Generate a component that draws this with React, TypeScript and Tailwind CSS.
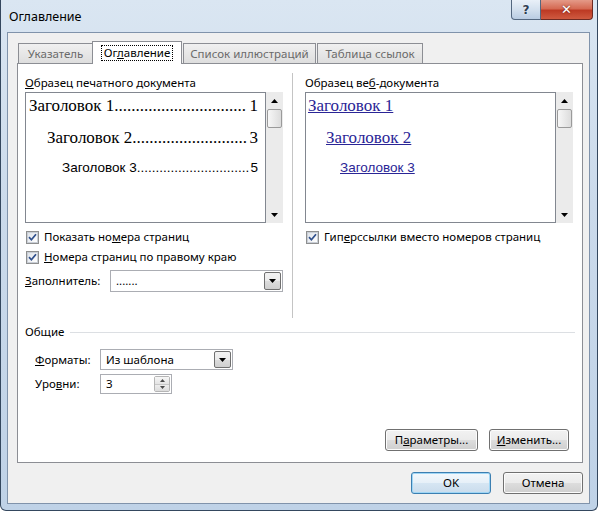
import React from "react";

function Tri({ up = false }: { up?: boolean }) {
  return (
    <svg width="7" height="4" viewBox="0 0 7 4">
      <path d={up ? "M0 4 L3.5 0 L7 4 Z" : "M0 0 L7 0 L3.5 4 Z"} fill="#000" />
    </svg>
  );
}

function Check() {
  return (
    <span className="w-[13px] h-[13px] border border-[#8e8f8f] bg-white flex items-center justify-center shrink-0">
      <span className="w-[11px] h-[11px] border border-[#c9ced6] bg-[linear-gradient(135deg,#dfe3e9,#ffffff)] flex items-center justify-center">
        <svg width="9" height="9" viewBox="0 0 9 9">
          <path d="M1 4.2 L3.4 6.8 L8 1.2" stroke="#2f4f8c" strokeWidth="1.7" fill="none" />
        </svg>
      </span>
    </span>
  );
}

function VScroll() {
  return (
    <div className="w-[17px] bg-[#ebebeb] flex flex-col items-center shrink-0">
      <div className="h-[17px] flex items-center justify-center">
        <Tri up />
      </div>
      <div className="w-[15px] h-[19px] border border-[#9a9a9a] rounded-[2px] bg-[linear-gradient(90deg,#f7f7f7,#dcdcdc)]" />
      <div className="flex-1" />
      <div className="h-[17px] flex items-center justify-center">
        <Tri />
      </div>
    </div>
  );
}

function DropBtn() {
  return (
    <div className="w-[17px] h-full border border-[#707070] rounded-[2px] bg-[linear-gradient(180deg,#f2f2f2_0%,#ebebeb_50%,#dddddd_50%,#cfcfcf_100%)] flex items-center justify-center">
      <Tri />
    </div>
  );
}

function Button({ children, w, def = false }: { children: React.ReactNode; w: string; def?: boolean }) {
  return (
    <div
      className={
        def
          ? `${w} h-[22px] border border-[#3c7fb1] rounded-[3px] bg-[linear-gradient(180deg,#f3f8fc_0%,#e6f0f8_50%,#d6e6f3_50%,#cadcec_100%)] shadow-[inset_0_0_0_1px_#9fd6f5] flex items-center justify-center`
          : `${w} h-[22px] border border-[#707070] rounded-[3px] bg-[linear-gradient(180deg,#f2f2f2_0%,#ebebeb_50%,#dddddd_50%,#cfcfcf_100%)] shadow-[inset_0_0_0_1px_#fcfcfc] flex items-center justify-center`
      }
    >
      {children}
    </div>
  );
}

// text + dot leader + page number, dots counted to fit the line
function TocLine({ text, dots, page, cls }: { text: string; dots: number; page: string; cls: string }) {
  return (
    <div className={`flex justify-between whitespace-nowrap ${cls}`}>
      <span>
        {text}
        {".".repeat(dots)}
      </span>
      <span>{page}</span>
    </div>
  );
}

export default function App() {
  return (
    <div className="w-[600px] h-[513px] bg-white font-['Noto_Sans',sans-serif] text-[11.5px] text-black">
      <div className="w-[598px] h-[511px] border-x border-b border-[#34475e] rounded-b-[6px] bg-[linear-gradient(180deg,#dae6f2_0%,#cbdaeb_40%,#bfd2e7_100%)] flex flex-col pl-[6px] pr-[7px] pb-[6px]">
        {/* title bar */}
        <div className="h-[32px] flex items-start">
          <span className="mt-[8px] ml-[2px] text-[12.5px] leading-[18px]">Оглавление</span>
          <div className="ml-auto mr-[-3px] flex">
            <div className="w-[30px] h-[20px] border border-[#53677f] border-t-0 rounded-bl-[4px] bg-[linear-gradient(180deg,#e9f0f8_0%,#d3e0ee_50%,#b9cce2_100%)] flex items-center justify-center font-['DejaVu_Sans',sans-serif] font-bold text-[12px] text-[#2e3d52] [text-shadow:0_0_2px_#ffffff]">
              ?
            </div>
            <div className="w-[52px] h-[20px] border border-[#6e2a22] border-t-0 border-l-0 rounded-br-[4px] bg-[linear-gradient(180deg,#e49a88_0%,#d56a53_45%,#bd3a24_55%,#cf5a40_100%)] flex items-center justify-center font-['DejaVu_Sans',sans-serif] font-bold text-[13px] text-white [text-shadow:0_0_2px_#5a1a12]">
              ✕
            </div>
          </div>
        </div>

        {/* client area */}
        <div className="flex-1 border border-[#8093ab] bg-[#f0f0f0] flex flex-col pl-[9px] pr-[6px] pt-[8px]">
          {/* tabs */}
          <div className="h-[22px] flex items-end pl-[1px] text-[#6a6a6a]">
            <div className="w-[75px] h-[20px] border border-b-0 border-[#8c8e94] bg-[linear-gradient(180deg,#f0f0f0,#dedede)] flex items-center justify-center">
              Указатель
            </div>
            <div className="relative z-10 w-[90px] h-[23px] mb-[-1px] ml-[-1px] border border-b-0 border-[#8c8e94] bg-white flex items-start justify-center pt-[3px] text-black">
              <span className="border border-dotted border-black px-[2px] leading-[14px]">
                Ог<u>л</u>авление
              </span>
            </div>
            <div className="w-[133px] h-[20px] ml-[1px] border border-b-0 border-[#8c8e94] bg-[linear-gradient(180deg,#f0f0f0,#dedede)] flex items-center justify-center">
              Список иллюстраций
            </div>
            <div className="w-[106px] h-[20px] ml-[1px] border border-b-0 border-[#8c8e94] bg-[linear-gradient(180deg,#f0f0f0,#dedede)] flex items-center justify-center">
              Таблица ссылок
            </div>
          </div>

          {/* panel */}
          <div className="h-[400px] border border-[#8c8e94] bg-white flex flex-col pl-[7px]">
            <div className="mt-[9px] h-[245px] flex">
              {/* left column */}
              <div className="w-[258px] flex flex-col pt-[2px]">
                <div className="leading-[16px]">
                  <u>О</u>бразец печатного документа
                </div>
                <div className="mt-[1px] h-[131px] flex">
                  <div className="flex-1 min-w-0 border border-[#828790] pl-[3px] pr-[7px] pt-[2px]">
                    <TocLine
                      text="Заголовок 1"
                      dots={31}
                      page="1"
                      cls="font-['Liberation_Serif',serif] text-[17px] leading-[22px] h-[22px]"
                    />
                    <TocLine
                      text="Заголовок 2"
                      dots={27}
                      page="3"
                      cls="mt-[10px] pl-[18px] font-['Liberation_Serif',serif] text-[17px] leading-[22px] h-[22px]"
                    />
                    <TocLine
                      text="Заголовок 3"
                      dots={30}
                      page="5"
                      cls="mt-[9px] pl-[33px] font-['Liberation_Sans',sans-serif] text-[13.5px] leading-[20px] h-[20px]"
                    />
                  </div>
                  <VScroll />
                </div>
                <div className="mt-[5px] h-[18px] flex items-center gap-[5px] pl-[1px]">
                  <Check />
                  <span>
                    Показать но<u>м</u>ера страниц
                  </span>
                </div>
                <div className="mt-[2px] h-[18px] flex items-center gap-[5px] pl-[1px]">
                  <Check />
                  <span>
                    <u>Н</u>омера страниц по правому краю
                  </span>
                </div>
                <div className="mt-[4px] h-[22px] flex items-center">
                  <span className="w-[85px]">
                    <u>З</u>аполнитель:
                  </span>
                  <div className="flex-1 h-full border border-[#abadb3] flex items-center pl-[5px] pr-[1px] py-[1px]">
                    <span className="flex-1 leading-[12px]">.......</span>
                    <DropBtn />
                  </div>
                </div>
              </div>

              {/* right column */}
              <div className="ml-[9px] w-[281px] border-l border-[#c4c4c4] pl-[12px] flex flex-col pt-[2px]">
                <div className="leading-[16px]">
                  Образец ве<u>б</u>-документа
                </div>
                <div className="mt-[1px] h-[131px] flex">
                  <div className="flex-1 min-w-0 border border-[#828790] pl-[2px] pt-[2px] text-[#2a2596]">
                    <div className="font-['Liberation_Serif',serif] text-[17px] leading-[22px] h-[22px]">
                      <u>Заголовок 1</u>
                    </div>
                    <div className="mt-[10px] pl-[18px] font-['Liberation_Serif',serif] text-[17px] leading-[22px] h-[22px]">
                      <u>Заголовок 2</u>
                    </div>
                    <div className="mt-[9px] pl-[32px] font-['Liberation_Sans',sans-serif] text-[13.5px] leading-[20px] h-[20px]">
                      <u>Заголовок 3</u>
                    </div>
                  </div>
                  <VScroll />
                </div>
                <div className="mt-[5px] h-[18px] flex items-center gap-[5px] pl-[1px]">
                  <Check />
                  <span>
                    Гип<u>е</u>рссылки вместо номеров страниц
                  </span>
                </div>
              </div>
            </div>

            {/* Общие */}
            <div className="mt-[6px] h-[16px] flex items-center pr-[7px]">
              <span className="leading-[16px]">Общие</span>
              <div className="flex-1 h-px bg-[#dcdfe3] ml-[6px]" />
            </div>
            <div className="mt-[9px] h-[21px] flex items-center pl-[10px]">
              <span className="w-[65px]">
                <u>Ф</u>орматы:
              </span>
              <div className="w-[133px] h-full border border-[#abadb3] flex items-center pl-[5px] pr-[1px] py-[1px]">
                <span className="flex-1">Из шаблона</span>
                <DropBtn />
              </div>
            </div>
            <div className="mt-[4px] h-[20px] flex items-center pl-[10px]">
              <span className="w-[65px]">
                Уро<u>в</u>ни:
              </span>
              <div className="w-[72px] h-full border border-[#abadb3] flex items-center pl-[5px] pr-[1px] py-[1px]">
                <span className="flex-1">3</span>
                <div className="w-[16px] h-full flex flex-col border border-[#b5b5b5] rounded-[2px]">
                  <div className="flex-1 border-b border-[#c8c8c8] bg-[linear-gradient(180deg,#f6f6f6,#e4e4e4)] flex items-center justify-center">
                    <svg width="5" height="3" viewBox="0 0 5 3">
                      <path d="M0 3 L2.5 0 L5 3 Z" fill="#4a4a4a" />
                    </svg>
                  </div>
                  <div className="flex-1 bg-[linear-gradient(180deg,#eeeeee,#dcdcdc)] flex items-center justify-center">
                    <svg width="5" height="3" viewBox="0 0 5 3">
                      <path d="M0 0 L5 0 L2.5 3 Z" fill="#4a4a4a" />
                    </svg>
                  </div>
                </div>
              </div>
            </div>

            <div className="mt-auto mb-[11px] flex justify-end gap-[11px] pr-[13px]">
              <Button w="w-[93px]">
                П<u>а</u>раметры...
              </Button>
              <Button w="w-[80px]">
                <u>И</u>зменить...
              </Button>
            </div>
          </div>

          {/* OK / Cancel */}
          <div className="mt-[9px] flex justify-end gap-[12px]">
            <Button w="w-[80px]" def>
              OK
            </Button>
            <Button w="w-[80px]">Отмена</Button>
          </div>
        </div>
      </div>
    </div>
  );
}
